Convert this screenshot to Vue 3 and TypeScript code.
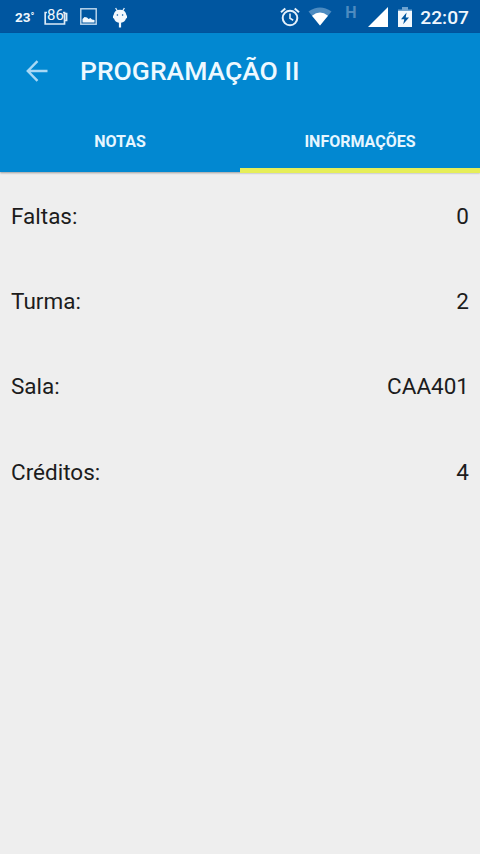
<script setup lang="ts">
import { ref } from 'vue'

interface Info {
  label: string
  value: string
}

const tabs = ['NOTAS', 'INFORMAÇÕES']
const activeTab = ref(1)

const infos: Info[] = [
  { label: 'Faltas:', value: '0' },
  { label: 'Turma:', value: '2' },
  { label: 'Sala:', value: 'CAA401' },
  { label: 'Créditos:', value: '4' },
]
</script>

<template>
  <div class="screen">
    <div class="status">
      <span class="temp">23<span class="degree">°</span></span>
      <span class="battery-level">
        <svg width="24" height="18" viewBox="0 0 24 18" fill="none" stroke="#dcebf7" stroke-width="1.7">
          <path d="M4 4.5H1.2V16H20.5V4.5H18.5M20.5 5.5H22.6V12.5H20.5" />
        </svg>
        <span class="level">86</span>
      </span>
      <svg class="picture" width="17" height="17" viewBox="0 0 17 17">
        <rect x="0.8" y="0.8" width="15.4" height="15.4" fill="none" stroke="#c3dbef" stroke-width="1.4" />
        <path d="M2.5 14.5V11L4.5 9L7 9.5L8.5 11L10.5 10L12 11.5L14.5 12V14.5Z" fill="#f2f8fd" />
      </svg>
      <svg class="droid" width="16" height="22" viewBox="0 0 16 22">
        <path d="M3.6 1L5.4 4M12.4 1L10.6 4" stroke="#e4f0fa" stroke-width="1.3" />
        <path d="M1.6 8Q2.5 2.8 8 2.8T14.4 8L15 9V11L14 11.5Q12.8 15.3 9.1 15.8V20.5H6.9V15.8Q3.2 15.3 2 11.5L1 11V9Z" fill="#f2f8fd" />
        <circle cx="5.4" cy="8" r="0.8" fill="#0056a0" />
        <circle cx="10.6" cy="8" r="0.8" fill="#0056a0" />
      </svg>

      <svg class="alarm" width="20" height="20" viewBox="0 0 20 20" fill="none" stroke="#e4f0fa">
        <circle cx="10" cy="11" r="7.3" stroke-width="2" />
        <path d="M10 6.5V11.3L13.2 13.2" stroke-width="1.6" />
        <path d="M1 5.2L5.3 1.5M19 5.2L14.7 1.5" stroke-width="2" />
      </svg>
      <svg class="wifi" width="24" height="19" viewBox="0 0 24 19">
        <path d="M0.5 4.6Q12 -3.5 23.5 4.6L12 18.5Z" fill="#4d8bc0" />
        <path d="M4 8.7Q12 2.5 20 8.7L12 18.5Z" fill="#fff" />
      </svg>
      <span class="network">H</span>
      <svg class="signal" width="20" height="20" viewBox="0 0 20 20">
        <path d="M0 20L20 0V20Z" fill="#fff" />
      </svg>
      <svg class="charging" width="14" height="20" viewBox="0 0 14 20">
        <path d="M4 0H10V2.5H14V5H0V2.5H4Z" fill="#6fa3d0" />
        <path d="M0 4H14V20H0Z" fill="#f2f8fd" />
        <path d="M8.6 5.5L3 12.2H6.3L5.2 17.2L11 10.5H7.7Z" fill="#0056a0" />
      </svg>
      <span class="clock">22:07</span>
    </div>

    <header class="header">
      <div class="toolbar">
        <svg class="back" width="22" height="22" viewBox="0 0 22 22" fill="none" stroke="#a9d8f5" stroke-width="2.4">
          <path d="M21.5 11H2M11.5 1.2L1.8 11L11.5 20.8" />
        </svg>
        <h1 class="title">PROGRAMAÇÃO II</h1>
      </div>
      <nav class="tabs">
        <button
          v-for="(tab, index) in tabs"
          :key="tab"
          class="tab"
          :class="{ active: activeTab === index }"
          @click="activeTab = index"
        >
          {{ tab }}
        </button>
      </nav>
    </header>

    <main class="content">
      <div v-for="info in infos" :key="info.label" class="row">
        <span>{{ info.label }}</span>
        <span>{{ info.value }}</span>
      </div>
    </main>
  </div>
</template>

<style>
body {
  margin: 0;
  background-color: #eee;
}
</style>

<style scoped>
.screen {
  width: 480px;
  height: 854px;
  overflow: hidden;
  background-color: #eee;
  font-family: Roboto, "Liberation Sans", sans-serif;
}

.status {
  display: flex;
  align-items: center;
  box-sizing: border-box;
  height: 33px;
  padding: 0 11px 0 15px;
  background-color: #0056a0;
  color: #f0f7fd;
}

.status svg {
  display: block;
  flex: none;
}

.temp {
  width: 29px;
  font-size: 13.5px;
  font-weight: 700;
  line-height: 33px;
  white-space: nowrap;
}

.degree {
  font-size: 10px;
  vertical-align: 2px;
}

.battery-level {
  position: relative;
  width: 24px;
  margin-right: 12px;
}

.level {
  position: absolute;
  top: 0;
  left: 3px;
  width: 16px;
  font-size: 15px;
  line-height: 14px;
  text-align: center;
  background-color: #0056a0;
}

.droid {
  margin-left: 15px;
  margin-top: 2px;
}

.alarm {
  margin-left: auto;
}

.wifi {
  margin-left: 8px;
}

.network {
  width: 13px;
  margin: -8px 10px 0 13px;
  color: #4d8bc0;
  font-size: 16px;
  font-weight: 700;
}

.charging {
  margin: 0 8px 0 10px;
}

.clock {
  font-size: 19.2px;
  font-weight: 500;
  line-height: 33px;
  padding-top: 2px;
}

.header {
  height: 139px;
  background-color: #0288d1;
  box-shadow: 0 1px 2px rgba(0, 0, 0, 0.35);
}

.toolbar {
  display: flex;
  align-items: center;
  height: 76px;
  padding-left: 26px;
}

.title {
  margin: 0 0 1px 32px;
  color: #eef9ff;
  font-size: 26.5px;
  font-weight: 500;
}

.tabs {
  display: flex;
  height: 64px;
}

.tab {
  flex: 1;
  padding: 5px 0 0;
  border: none;
  border-bottom: 5px solid transparent;
  background: none;
  color: #e6f6ff;
  font-family: inherit;
  font-size: 16px;
  font-weight: 700;
}

.active {
  border-bottom-color: #e6ee58;
}

.content {
  padding: 1px 11px 0;
}

.row {
  display: flex;
  align-items: center;
  justify-content: space-between;
  height: 85.3px;
  color: #1c1c1c;
  font-size: 22.5px;
}
</style>
